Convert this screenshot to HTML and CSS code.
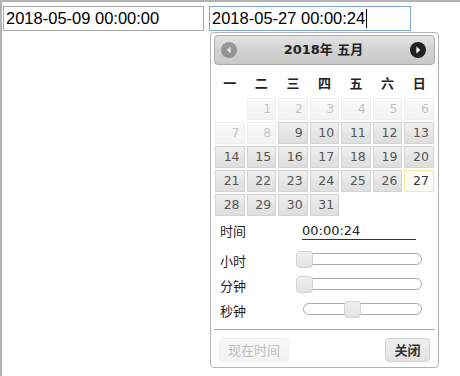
FILE: index.html
```html
<!DOCTYPE html>
<html lang="zh">
<head>
<meta charset="utf-8">
<title>日期时间选择</title>
<link rel="stylesheet" href="styles.css">
</head>
<body>
<div class="page">
  <div class="inputs">
    <div class="field">2018-05-09 00:00:00</div>
    <div class="field focused">2018-05-27 00:00:24<span class="caret"></span></div>
  </div>

  <div class="dp">
    <div class="dp-header">
      <span class="nav prev">
        <svg viewBox="0 0 16 16" width="16" height="16"><circle cx="8" cy="8" r="8" fill="#222"/><path d="M9.6 4.6 L5.6 8 L9.6 11.4 Z" fill="#fff"/></svg>
      </span>
      <span class="title">2018年&nbsp;五月</span>
      <span class="nav next">
        <svg viewBox="0 0 16 16" width="16" height="16"><circle cx="8" cy="8" r="8" fill="#222"/><path d="M6.4 4.6 L10.4 8 L6.4 11.4 Z" fill="#fff"/></svg>
      </span>
    </div>

    <table class="cal">
      <thead>
        <tr><th>一</th><th>二</th><th>三</th><th>四</th><th>五</th><th>六</th><th>日</th></tr>
      </thead>
      <tbody>
        <tr><td></td><td><span class="day off">1</span></td><td><span class="day off">2</span></td><td><span class="day off">3</span></td><td><span class="day off">4</span></td><td><span class="day off">5</span></td><td><span class="day off">6</span></td></tr>
        <tr><td><span class="day off">7</span></td><td><span class="day off">8</span></td><td><span class="day">9</span></td><td><span class="day">10</span></td><td><span class="day">11</span></td><td><span class="day">12</span></td><td><span class="day">13</span></td></tr>
        <tr><td><span class="day">14</span></td><td><span class="day">15</span></td><td><span class="day">16</span></td><td><span class="day">17</span></td><td><span class="day">18</span></td><td><span class="day">19</span></td><td><span class="day">20</span></td></tr>
        <tr><td><span class="day">21</span></td><td><span class="day">22</span></td><td><span class="day">23</span></td><td><span class="day">24</span></td><td><span class="day">25</span></td><td><span class="day">26</span></td><td><span class="day today">27</span></td></tr>
        <tr><td><span class="day">28</span></td><td><span class="day">29</span></td><td><span class="day">30</span></td><td><span class="day">31</span></td><td></td><td></td><td></td></tr>
      </tbody>
    </table>

    <div class="time">
      <div class="row time-row">
        <span class="label">时间</span>
        <span class="value">00:00:24</span>
      </div>
      <div class="row">
        <span class="label">小时</span>
        <div class="track"><span class="handle" style="left:0%"></span></div>
      </div>
      <div class="row">
        <span class="label">分钟</span>
        <div class="track"><span class="handle" style="left:0%"></span></div>
      </div>
      <div class="row">
        <span class="label">秒钟</span>
        <div class="track"><span class="handle" style="left:40.68%"></span></div>
      </div>
    </div>

    <div class="buttons">
      <span class="btn disabled">现在时间</span>
      <span class="btn primary">关闭</span>
    </div>
  </div>
</div>
</body>
</html>
```

FILE: styles.css
```css
html, body {
  margin: 0;
  padding: 0;
  background: #fff;
}

.page {
  position: relative;
  height: 376px;
  box-sizing: border-box;
  border-top: 2px solid #b4b4b4;
  border-left: 2px solid #b4b4b4;
  font-family: "Noto Sans CJK SC", sans-serif;
}

.inputs {
  display: flex;
  gap: 5px;
  padding: 4px 0 0 1px;
}

.field {
  box-sizing: border-box;
  width: 201px;
  height: 25px;
  border: 1px solid #a9a9a9;
  padding: 0 2px;
  font-family: "Liberation Sans", Arial, sans-serif;
  font-size: 16.5px;
  line-height: 23px;
  color: #000;
  white-space: nowrap;
  overflow: hidden;
}

.field.focused {
  width: 202px;
  border-color: #7ea6e0;
}

.caret {
  display: inline-block;
  width: 1px;
  height: 19px;
  background: #000;
  vertical-align: -4px;
  margin-left: 1px;
}

/* Datepicker popup */
.dp {
  position: absolute;
  left: 208px;
  top: 30px;
  width: 229px;
  box-sizing: border-box;
  padding: 2px 3px 0;
  border: 1px solid #b3b3b3;
  border-radius: 4px;
  background: #fff;
  font-family: "DejaVu Sans", Verdana, "Noto Sans CJK SC", sans-serif;
}

.dp-header {
  display: flex;
  align-items: center;
  height: 30px;
  box-sizing: border-box;
  padding: 0 8px 0 6px;
  border: 1px solid #aaa;
  border-radius: 4px;
  background: linear-gradient(#e4e4e4, #d2d2d2 50%, #c9c9c9);
  color: #222;
}

.nav {
  display: flex;
  width: 16px;
  height: 16px;
}

.nav.prev {
  opacity: 0.35;
}

.title {
  flex: 1;
  text-align: center;
  font-family: "DejaVu Sans", Verdana, "Noto Sans CJK SC", sans-serif;
  font-weight: bold;
  font-size: 13px;
  line-height: 16px;
}

.cal {
  width: 100%;
  border-collapse: collapse;
  margin-top: 2px;
  table-layout: fixed;
}

.cal th {
  height: 30px;
  padding: 0;
  font-family: "Noto Sans CJK SC", sans-serif;
  font-weight: bold;
  font-size: 13px;
  color: #222;
  text-align: center;
}

.cal td {
  padding: 1px;
  height: 22px;
}

.day {
  display: block;
  box-sizing: border-box;
  height: 22px;
  border: 1px solid #d3d3d3;
  background: linear-gradient(#f2f2f2, #e6e6e6 50%, #dedede);
  color: #555;
  text-align: right;
  padding-right: 4px;
  font-size: 12.5px;
  line-height: 20px;
}

.day.off {
  opacity: 0.35;
}

.day.today {
  border-color: #f5e6a2;
  background: #fdfcf5;
  color: #363636;
}

/* Time section */
.time {
  display: flex;
  flex-direction: column;
}

.row {
  display: grid;
  grid-template-columns: 89px 119px;
  align-items: start;
  height: 25px;
}

.time-row {
  height: 30px;
}

.label {
  padding: 5px 0 0 6px;
  font-family: "Noto Sans CJK SC", sans-serif;
  font-size: 13px;
  line-height: 18px;
  color: #222;
}

.time-row .label {
  padding-top: 5px;
}

.value {
  margin: 6px 0 0 -1px;
  width: 114px;
  border-bottom: 1px solid #333;
  font-family: "DejaVu Sans", Verdana, sans-serif;
  font-size: 13px;
  line-height: 16px;
  color: #222;
}

.track {
  position: relative;
  margin-top: 6px;
  height: 12px;
  box-sizing: border-box;
  border: 1px solid #aaa;
  border-radius: 6px;
  background: #fff;
}

.handle {
  position: absolute;
  top: -3px;
  width: 17px;
  height: 17px;
  margin-left: -8px;
  box-sizing: border-box;
  border: 1px solid #d3d3d3;
  border-radius: 4px;
  background: linear-gradient(#f0f0f0, #e2e2e2);
}

.buttons {
  display: flex;
  justify-content: space-between;
  margin-top: 7px;
  border-top: 1px solid #aaa;
  padding: 8px 5px 5px;
}

.btn {
  box-sizing: border-box;
  height: 24px;
  border: 1px solid #d3d3d3;
  border-radius: 4px;
  background: linear-gradient(#f0f0f0, #e2e2e2);
  font-family: "Noto Sans CJK SC", sans-serif;
  font-size: 13px;
  line-height: 22px;
  text-align: center;
  color: #555;
}

.btn.disabled {
  width: 70px;
  opacity: 0.4;
}

.btn.primary {
  width: 45px;
  font-weight: bold;
  color: #333;
}
```
